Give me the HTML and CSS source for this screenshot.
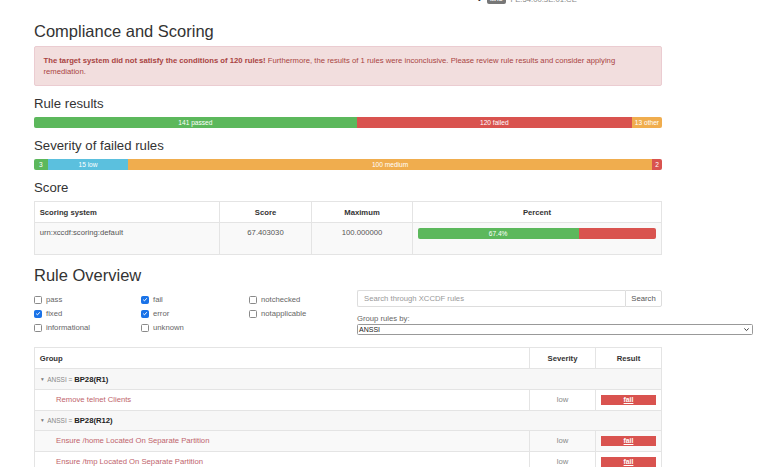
FILE: index.html
```html
<!DOCTYPE html>
<html>
<head>
<meta charset="utf-8">
<link rel="stylesheet" href="styles.css">
</head>
<body>
<div class="container">
  <div class="hostinfo"><span class="bullet">•</span><span class="label-mac">MAC</span><span class="mac">FE:54:00:3E:01:CE</span></div>

  <h2 class="h2-first">Compliance and Scoring</h2>
  <div class="alert"><strong>The target system did not satisfy the conditions of 120 rules!</strong><span> Furthermore, the results of 1 rules were inconclusive. Please review rule results and consider applying remediation.</span></div>

  <h3>Rule results</h3>
  <div class="progress">
    <div class="bar green" style="width:51.4%">141 passed</div>
    <div class="bar red" style="width:43.8%">120 failed</div>
    <div class="bar orange" style="width:4.8%">13 other</div>
  </div>

  <h3>Severity of failed rules</h3>
  <div class="progress">
    <div class="bar green" style="width:2.2%">3</div>
    <div class="bar blue" style="width:12.8%">15 low</div>
    <div class="bar orange" style="width:83.4%">100 medium</div>
    <div class="bar red" style="width:1.6%">2</div>
  </div>

  <h3>Score</h3>
  <table class="score">
    <colgroup><col class="w-sys"><col class="w-score"><col class="w-max"><col></colgroup>
    <thead>
      <tr><th>Scoring system</th><th class="center">Score</th><th class="center">Maximum</th><th class="center">Percent</th></tr>
    </thead>
    <tbody>
      <tr>
        <td>urn:xccdf:scoring:default</td>
        <td class="center">67.403030</td>
        <td class="center">100.000000</td>
        <td>
          <div class="progress progress-cell">
            <div class="bar green" style="width:67.4%">67.4%</div>
            <div class="bar red" style="width:32.6%"></div>
          </div>
        </td>
      </tr>
    </tbody>
  </table>

  <h2>Rule Overview</h2>
  <div class="overview-form">
    <div class="checks">
      <label class="check"><span class="box"></span>pass</label>
      <label class="check"><span class="box on"><svg viewBox="0 0 8 8"><path d="M1.6 4.2 L3.3 5.8 L6.4 2.3" /></svg></span>fail</label>
      <label class="check"><span class="box"></span>notchecked</label>
      <label class="check"><span class="box on"><svg viewBox="0 0 8 8"><path d="M1.6 4.2 L3.3 5.8 L6.4 2.3" /></svg></span>fixed</label>
      <label class="check"><span class="box on"><svg viewBox="0 0 8 8"><path d="M1.6 4.2 L3.3 5.8 L6.4 2.3" /></svg></span>error</label>
      <label class="check"><span class="box"></span>notapplicable</label>
      <label class="check"><span class="box"></span>informational</label>
      <label class="check"><span class="box"></span>unknown</label>
    </div>
    <div class="search-col">
      <div class="input-group">
        <div class="input">Search through XCCDF rules</div>
        <div class="btn">Search</div>
      </div>
      <div class="group-label">Group rules by:</div>
      <div class="select"><span>ANSSI</span><svg viewBox="0 0 8 8"><path d="M1.5 2.8 L4 5.2 L6.5 2.8" /></svg></div>
    </div>
  </div>

  <table class="rules">
    <colgroup><col><col class="w-sev"><col class="w-res"></colgroup>
    <thead>
      <tr><th>Group</th><th class="center">Severity</th><th class="center">Result</th></tr>
    </thead>
    <tbody>
      <tr class="grp"><td colspan="3"><span class="tri">▼</span><span class="gname">ANSSI = </span><strong>BP28(R1)</strong></td></tr>
      <tr class="leaf"><td class="rule">Remove telnet Clients</td><td class="sev">low</td><td class="res"><span class="fail">fail</span></td></tr>
      <tr class="grp"><td colspan="3"><span class="tri">▼</span><span class="gname">ANSSI = </span><strong>BP28(R12)</strong></td></tr>
      <tr class="leaf alt"><td class="rule">Ensure /home Located On Separate Partition</td><td class="sev">low</td><td class="res"><span class="fail">fail</span></td></tr>
      <tr class="leaf"><td class="rule">Ensure /tmp Located On Separate Partition</td><td class="sev">low</td><td class="res"><span class="fail">fail</span></td></tr>
    </tbody>
  </table>
</div>
</body>
</html>
```

FILE: styles.css
```css
html, body {
  margin: 0;
  padding: 0;
  background: #fff;
}
body {
  font-family: "Liberation Sans", Arial, Helvetica, sans-serif;
  font-size: 7.7px;
  line-height: 11px;
  color: #333;
  overflow: hidden;
}
.container {
  width: 628px;
  padding-left: 34px;
}
.hostinfo {
  margin-top: -6px;
  height: 11px;
  padding-left: 444px;
  display: flex;
  align-items: center;
  white-space: nowrap;
  color: #777;
}
.bullet {
  width: 9px;
  color: #333;
}
.label-mac {
  background: #777;
  color: #fff;
  font-size: 5.5px;
  font-weight: bold;
  padding: 1px 3px;
  border-radius: 2px;
  line-height: 7px;
  margin-right: 5px;
}
.mac {
  color: #888;
}
h2 {
  font-size: 16.5px;
  font-weight: 500;
  line-height: 18.15px;
  margin: 11px 0 5.5px;
  color: #333;
}
.h2-first {
  margin-top: 17px;
}
h3 {
  font-size: 13.2px;
  font-weight: 500;
  line-height: 14.5px;
  margin: 11px 0 5.5px;
  color: #333;
}
.alert {
  background: #f2dede;
  border: 1px solid #ebccd1;
  color: #a94442;
  border-radius: 2px;
  padding: 8.25px 8.5px;
  margin-bottom: 11px;
}
.alert strong {
  font-weight: bold;
}
.progress {
  display: flex;
  height: 11px;
  border-radius: 2px;
  overflow: hidden;
  background: #f5f5f5;
  margin-bottom: 11px;
}
.bar {
  height: 11px;
  color: #fff;
  font-size: 6.6px;
  line-height: 11px;
  text-align: center;
  white-space: nowrap;
  overflow: hidden;
}
.green { background: #5cb85c; }
.red { background: #d9534f; }
.orange { background: #f0ad4e; }
.blue { background: #5bc0de; }

table {
  border-collapse: collapse;
  table-layout: fixed;
  width: 628px;
  border: 1px solid #e4e4e4;
}
th, td {
  border: 1px solid #e4e4e4;
  padding: 4.4px 4.7px;
  text-align: left;
  vertical-align: top;
  line-height: 11px;
  white-space: nowrap;
}
th {
  font-weight: bold;
  color: #333;
}
.center { text-align: center; }
.score {
  margin-bottom: 11px;
}
.score tbody tr {
  background: #f9f9f9;
}
.score td {
  color: #555;
}
.w-sys { width: 185px; }
.w-score { width: 92px; }
.w-max { width: 101px; }
.progress-cell {
  margin-top: 0.6px;
}

.overview-form {
  display: grid;
  grid-template-columns: 323px 305px;
  margin-top: 1.3px;
  margin-bottom: 12px;
}
.checks {
  display: grid;
  grid-template-columns: 107px 108px 1fr;
  grid-auto-rows: 14px;
  margin-top: 3px;
}
.check {
  display: flex;
  align-items: center;
  color: #666;
}
.box {
  width: 6px;
  height: 6px;
  border: 0.8px solid #8a8a8a;
  border-radius: 1.5px;
  margin-right: 4px;
  display: flex;
  align-items: center;
  justify-content: center;
  background: #fff;
}
.box.on {
  background: #1a73e8;
  border-color: #1a73e8;
}
.box svg {
  width: 7px;
  height: 7px;
  fill: none;
  stroke: #fff;
  stroke-width: 1.3;
}
.search-col {
  display: flex;
  flex-direction: column;
}
.input-group {
  display: flex;
  height: 17px;
}
.input {
  flex: 1;
  border: 1px solid #ddd;
  border-right: none;
  border-radius: 2px 0 0 2px;
  color: #999;
  padding-left: 6px;
  line-height: 15px;
}
.btn {
  width: 35px;
  border: 1px solid #ddd;
  border-radius: 0 2px 2px 0;
  text-align: center;
  line-height: 15px;
  color: #555;
}
.group-label {
  margin-top: 6px;
  color: #666;
  line-height: 11px;
}
.select {
  width: 393px;
  height: 9px;
  border: 1px solid #999;
  border-radius: 1.5px;
  display: flex;
  align-items: center;
  justify-content: space-between;
  padding-left: 1px;
  font-size: 7px;
  color: #222;
}
.select svg {
  width: 7px;
  height: 7px;
  fill: none;
  stroke: #333;
  stroke-width: 1.1;
  margin-right: 2px;
}

.w-sev { width: 66px; }
.w-res { width: 66px; }
.rules th {
  padding-top: 5px;
  padding-bottom: 4.4px;
}
.rules td {
  padding-top: 4.3px;
  padding-bottom: 4.3px;
}
.grp td {
  background: #f7f7f7;
  padding-left: 5px;
}
.tri {
  font-size: 4.8px;
  color: #777;
  margin-right: 2.5px;
  vertical-align: 1px;
}
.gname {
  font-size: 6.5px;
  color: #888;
}
.grp strong {
  color: #222;
}
.leaf.alt td {
  background: #f9f9f9;
}
.rule {
  padding-left: 21px;
  color: #c0646c;
}
.sev {
  text-align: center;
  color: #888;
}
.res {
  text-align: center;
}
.fail {
  display: block;
  background: #d9534f;
  color: #fff;
  font-weight: bold;
  text-decoration: underline;
  font-size: 6.8px;
  line-height: 10px;
  height: 10px;
  margin: 0.5px 0;
}
```
